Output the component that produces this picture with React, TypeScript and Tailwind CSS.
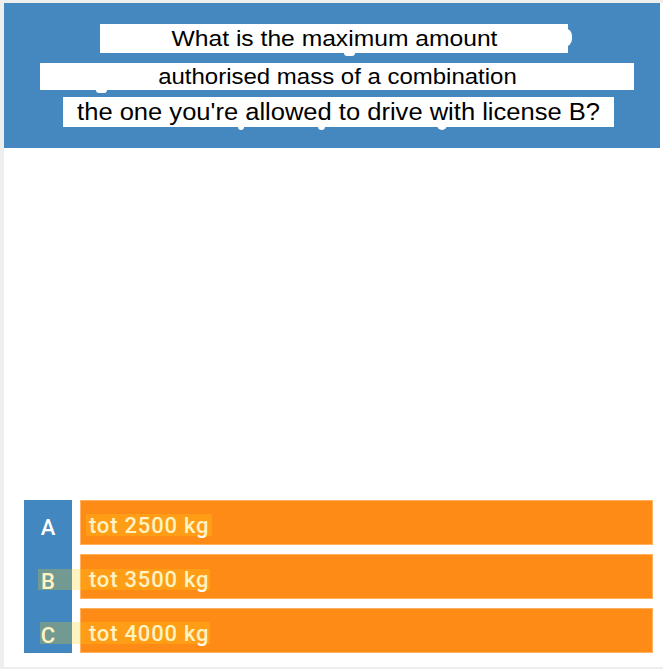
import React from 'react';

type Bump = { pos: string };

const question: { text: string; box: string; type: string; bumps: Bump[] }[] = [
  {
    text: 'What is the maximum amount',
    box: 'ml-[96px] w-[468px] h-[29px]',
    type: 'text-[22px] scale-x-112',
    bumps: [
      { pos: 'left-[244px] -bottom-[3px] w-[11px] h-[6px] rounded-full' },
      { pos: '-right-[4px] top-[4px] w-[8px] h-[19px] rounded-r-full' },
    ],
  },
  {
    text: 'authorised mass of a combination',
    box: 'mt-[10px] ml-[36px] w-[594px] h-[27px]',
    type: 'text-[22px] scale-x-109',
    bumps: [{ pos: 'left-[56px] -bottom-[3px] w-[11px] h-[6px] rounded-full' }],
  },
  {
    text: "the one you're allowed to drive with license B?",
    box: 'mt-[7px] ml-[59px] w-[551px] h-[30px]',
    type: 'text-[23px] scale-x-111',
    bumps: [
      { pos: 'left-[175px] -bottom-[3px] w-[6px] h-[6px] rounded-b-full' },
      { pos: 'left-[255px] -bottom-[3px] w-[7px] h-[6px] rounded-b-full' },
      { pos: 'left-[374px] -bottom-[3px] w-[10px] h-[6px] rounded-b-full' },
    ],
  },
];

const answers = [
  { letter: 'A', text: 'tot 2500 kg' },
  { letter: 'B', text: 'tot 3500 kg' },
  { letter: 'C', text: 'tot 4000 kg' },
];

export default function App() {
  return (
    <div className="w-[663px] h-[669px] bg-[#eeeeee] pl-[4px] pt-[3px] pb-[2px]">
      <div className="h-full bg-white flex flex-col">
        {/* question header */}
        <div className="w-[656px] h-[145px] bg-[#4588bf] pt-[21px] flex flex-col">
          {question.map((q) => (
            <div
              key={q.text}
              className={`${q.box} relative bg-white flex items-center justify-center text-black leading-none font-['Liberation_Sans',Arial,sans-serif]`}
            >
              <span className={`inline-block ${q.type}`}>{q.text}</span>
              {q.bumps.map((b, i) => (
                <span key={i} className={`absolute ${b.pos} bg-white`} />
              ))}
            </div>
          ))}
        </div>

        {/* answers */}
        <div className="flex-1 flex flex-col justify-end pb-[14px]">
          <div className="relative ml-[20px] flex gap-[8px] font-['Roboto',sans-serif]">
            <div className="w-[48px] bg-[#4287bf] flex flex-col gap-[9px]">
              {answers.map((a) => (
                <div
                  key={a.letter}
                  className="h-[45px] flex items-center justify-center pt-[10px] text-white text-[22px] font-medium"
                >
                  {a.letter}
                </div>
              ))}
            </div>
            <div className="w-[573px] flex flex-col gap-[9px]">
              {answers.map((a) => (
                <div
                  key={a.text}
                  className="h-[45px] bg-[#ff8b17] border border-[#ffb060] flex items-center pl-[8px] pt-[5px] text-white text-[22px] font-medium tracking-[0.8px]"
                >
                  {a.text}
                </div>
              ))}
            </div>
            {/* highlight marks */}
            <div className="absolute left-[62px] top-[14px] w-[126px] h-[22px] bg-[rgba(255,208,20,0.26)]" />
            <div className="absolute left-[14px] top-[69px] w-[172px] h-[21px] bg-[rgba(255,208,20,0.26)]" />
            <div className="absolute left-[16px] top-[122px] w-[170px] h-[22px] bg-[rgba(255,208,20,0.26)]" />
          </div>
        </div>
      </div>
    </div>
  );
}
